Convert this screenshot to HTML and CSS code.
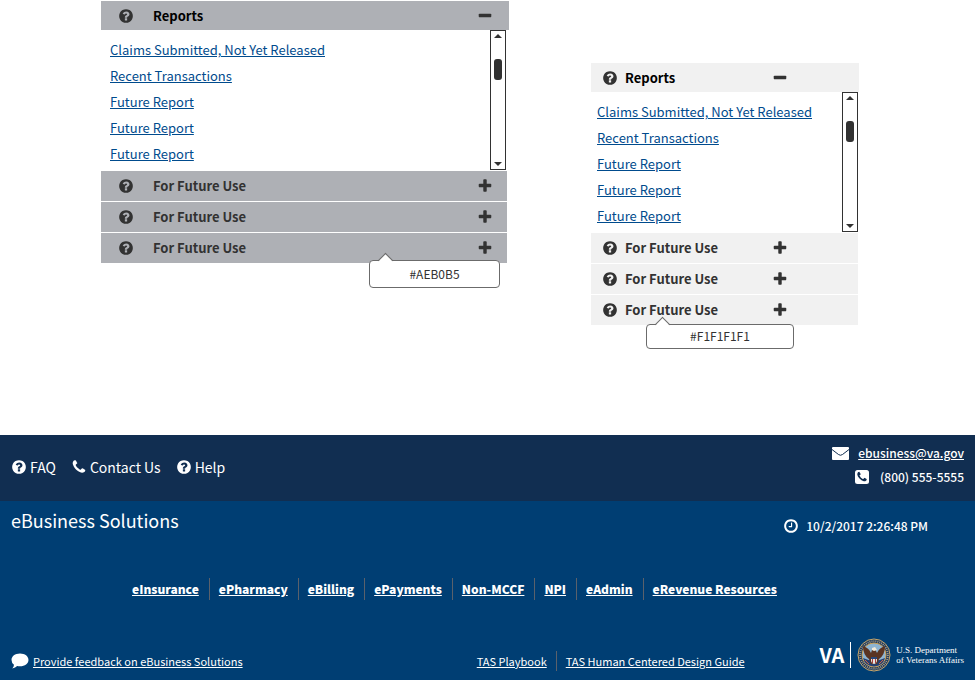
FILE: index.html
```html
<!DOCTYPE html>
<html lang="en">
<head>
<meta charset="utf-8">
<title>eBusiness Solutions</title>
<link rel="stylesheet" href="styles.css">
</head>
<body>
<svg class="sprite" aria-hidden="true">
  <symbol id="question" viewBox="0 0 1792 1792"><path d="M1024 1376v-192q0-14-9-23t-23-9h-192q-14 0-23 9t-9 23v192q0 14 9 23t23 9h192q14 0 23-9t9-23zm256-672q0-88-55.500-163t-138.500-116-170-41q-243 0-371 213-15 24 8 42l132 100q7 6 19 6 16 0 25-12 53-68 86-92 34-24 86-24 48 0 85.500 26t37.500 59q0 38-20 61t-68 45q-63 28-115.500 86.500t-52.500 125.500v36q0 14 9 23t23 9h192q14 0 23-9t9-23q0-19 21.500-49.500t54.500-49.500q32-18 49-28.500t46-35 44.500-48 28-60.500 12.500-81zm384 192q0 209-103 385.500t-279.500 279.500-385.500 103-385.500-103-279.500-279.500-103-385.500 103-385.500 279.500-279.500 385.500-103 385.500 103 279.500 279.500 103 385.500z"/></symbol>
  <symbol id="plus" viewBox="0 0 1792 1792"><path d="M1600 736v192q0 40-28 68t-68 28h-416v416q0 40-28 68t-68 28h-192q-40 0-68-28t-28-68v-416h-416q-40 0-68-28t-28-68v-192q0-40 28-68t68-28h416v-416q0-40 28-68t68-28h192q40 0 68 28t28 68v416h416q40 0 68 28t28 68z"/></symbol>
  <symbol id="minus" viewBox="0 0 1792 1792"><path d="M1600 736v192q0 40-28 68t-68 28h-1216q-40 0-68-28t-28-68v-192q0-40 28-68t68-28h1216q40 0 68 28t28 68z"/></symbol>
  <symbol id="phone" viewBox="0 0 1792 1792"><path d="M1600 1240q0 27-10 70.500t-21 68.500q-21 50-122 106-94 51-186 51-27 0-53-3.500t-57.500-12.500-47-14.500-55.500-20.500-49-18q-98-35-175-83-127-79-264-216t-216-264q-48-77-83-175-3-9-18-49t-20.500-55.500-14.500-47-12.500-57.500-3.500-53q0-92 51-186 56-101 106-122 25-11 68.500-21t70.500-10q14 0 21 3 18 6 53 76 11 19 30 54t35 63.500 31 53.500q3 4 17.500 25t21.500 35.500 7 28.500q0 20-28.500 50t-62 55-62 53-28.500 46q0 9 5 22.500t8.500 20.500 14 24 11.500 19q76 137 174 235t235 174q2 1 19 11.500t24 14 20.500 8.500 22.500 5q18 0 46-28.500t53-62 55-62 50-28.500q14 0 28.500 7t35.500 21.500 25 17.500q25 15 53.500 31t63.500 35 54 30q70 35 76 53 3 7 3 21z"/></symbol>
  <symbol id="clock" viewBox="0 0 1792 1792"><path d="M1024 544v448q0 14-9 23t-23 9h-320q-14 0-23-9t-9-23v-64q0-14 9-23t23-9h224v-352q0-14 9-23t23-9h64q14 0 23 9t9 23zm416 352q0-148-73-273t-198-198-273-73-273 73-198 198-73 273 73 273 198 198 273 73 273-73 198-198 73-273zm224 0q0 209-103 385.500t-279.500 279.500-385.500 103-385.500-103-279.500-279.500-103-385.500 103-385.500 279.500-279.500 385.500-103 385.500 103 279.500 279.500 103 385.500z"/></symbol>
</svg>

<main class="panels">
  <section class="panel panel-dark">
    <h2 class="bar bar-open">
      <svg class="icon"><use href="#question"/></svg>
      <button class="bar-toggle" type="button" aria-expanded="true"><span>Reports</span><svg class="icon"><use href="#minus"/></svg></button>
    </h2>
    <div class="panel-body">
      <ul class="reports">
        <li><a href="#">Claims Submitted, Not Yet Released</a></li>
        <li><a href="#">Recent Transactions</a></li>
        <li><a href="#">Future Report</a></li>
        <li><a href="#">Future Report</a></li>
        <li><a href="#">Future Report</a></li>
      </ul>
      <div class="scrollbar"><span class="arrow arrow-up"></span><span class="thumb"></span><span class="arrow arrow-down"></span></div>
    </div>
    <h2 class="bar"><svg class="icon"><use href="#question"/></svg><button class="bar-toggle" type="button"><span>For Future Use</span><svg class="icon"><use href="#plus"/></svg></button></h2>
    <h2 class="bar"><svg class="icon"><use href="#question"/></svg><button class="bar-toggle" type="button"><span>For Future Use</span><svg class="icon"><use href="#plus"/></svg></button></h2>
    <h2 class="bar"><svg class="icon"><use href="#question"/></svg><button class="bar-toggle" type="button"><span>For Future Use</span><svg class="icon"><use href="#plus"/></svg></button></h2>
    <div class="callout">#AEB0B5</div>
  </section>

  <section class="panel panel-light">
    <h2 class="bar bar-open">
      <svg class="icon"><use href="#question"/></svg>
      <button class="bar-toggle" type="button" aria-expanded="true"><span>Reports</span><svg class="icon"><use href="#minus"/></svg></button>
    </h2>
    <div class="panel-body">
      <ul class="reports">
        <li><a href="#">Claims Submitted, Not Yet Released</a></li>
        <li><a href="#">Recent Transactions</a></li>
        <li><a href="#">Future Report</a></li>
        <li><a href="#">Future Report</a></li>
        <li><a href="#">Future Report</a></li>
      </ul>
      <div class="scrollbar"><span class="arrow arrow-up"></span><span class="thumb"></span><span class="arrow arrow-down"></span></div>
    </div>
    <h2 class="bar"><svg class="icon"><use href="#question"/></svg><button class="bar-toggle" type="button"><span>For Future Use</span><svg class="icon"><use href="#plus"/></svg></button></h2>
    <h2 class="bar"><svg class="icon"><use href="#question"/></svg><button class="bar-toggle" type="button"><span>For Future Use</span><svg class="icon"><use href="#plus"/></svg></button></h2>
    <h2 class="bar"><svg class="icon"><use href="#question"/></svg><button class="bar-toggle" type="button"><span>For Future Use</span><svg class="icon"><use href="#plus"/></svg></button></h2>
    <div class="callout">#F1F1F1F1</div>
  </section>
</main>

<footer>
  <div class="support">
    <nav class="support-links">
      <a href="#"><svg class="icon"><use href="#question"/></svg>FAQ</a>
      <a href="#"><svg class="icon"><use href="#phone"/></svg>Contact Us</a>
      <a href="#"><svg class="icon"><use href="#question"/></svg>Help</a>
    </nav>
    <address class="contact">
      <div><svg class="icon-mail" viewBox="0 0 18 14"><rect y="1" width="17" height="13" rx="1"/><path d="M0 3.500L6.500 8.500Q8.500 10 10.500 8.500L17 3.500"/></svg><a href="#">ebusiness@va.gov</a></div>
      <div><svg class="icon-call" viewBox="0 0 14 14"><rect width="14" height="14" rx="2.500"/><use href="#phone" x="1" y="1" width="12" height="12"/></svg><span>(800) 555-5555</span></div>
    </address>
  </div>
  <div class="site">
    <div class="site-top">
      <h1>eBusiness Solutions</h1>
      <p class="time"><svg class="icon"><use href="#clock"/></svg>10/2/2017 2:26:48 PM</p>
    </div>
    <nav class="divided site-nav">
      <a href="#">eInsurance</a><a href="#">ePharmacy</a><a href="#">eBilling</a><a href="#">ePayments</a><a href="#">Non-MCCF</a><a href="#">NPI</a><a href="#">eAdmin</a><a href="#">eRevenue Resources</a>
    </nav>
    <div class="site-bottom">
      <div class="feedback"><svg class="icon-comment" viewBox="0 0 17 15"><path d="M8.500 0.500C13.200 0.500 16.500 3.200 16.500 6.500S13.200 12.500 8.500 12.500Q7 12.500 5.800 12.200Q4.200 13.900 1.200 14.500Q2.800 13 2.800 11Q0.500 9.200 0.500 6.500C0.500 3.200 3.800 0.500 8.500 0.500Z"/></svg><a href="#">Provide feedback on eBusiness Solutions</a></div>
      <nav class="divided guides"><a href="#">TAS Playbook</a><a href="#">TAS Human Centered Design Guide</a></nav>
      <div class="logo">
        <strong>VA</strong>
        <svg class="seal" viewBox="0 0 34 34">
          <circle cx="17" cy="17" r="16" fill="#17365c" stroke="#c9a76b"/>
          <circle cx="17" cy="17" r="13.800" fill="none" stroke="#a99b86" stroke-width="2" stroke-dasharray="1 1"/>
          <circle cx="17" cy="17" r="12" fill="#8eb4d2" stroke="#d0a050"/>
          <path d="M6 20Q17 25 28 20Q26 28 17 28.500Q8 28 6 20Z" fill="#263f70"/>
          <path d="M6 8Q6 17 12 21L14 26L20 26L22 21Q28 17 28 8Q22 10 20 15L18 11L15 12L14 15Q12 10 6 8Z" fill="#5a3423"/>
          <path d="M15 10L18 9L20 12L17 13L15 12Z" fill="#f3ead8"/>
          <path d="M14 19H20V22Q20 25 17 26Q14 25 14 22Z" fill="#e9e5e2"/>
          <path d="M15.500 21V25M18.500 21V25" stroke="#ad3f3c"/>
          <path d="M14 19H20V21H14Z" fill="#29477a"/>
          <path d="M8 22L12 26M26 22L22 26" stroke="#c96545"/>
        </svg>
        <span>U.S. Department<br>of Veterans Affairs</span>
      </div>
    </div>
  </div>
</footer>
</body>
</html>
```
FILE: styles.css
```css
* { box-sizing: border-box; }

body {
  display: flex;
  flex-direction: column;
  min-height: 100vh;
  margin: 0;
  background: #fff;
  color: #323232;
  font: 13px/20px "Noto Sans CJK SC", "Open Sans", sans-serif;
}

h1, h2, p, ul { margin: 0; padding: 0; }
ul { list-style: none; }
a { color: inherit; }
.sprite { position: absolute; width: 0; height: 0; }
.icon { flex: none; width: 16px; height: 16px; fill: currentColor; }

/* Accordion panels */
.panels {
  flex: 1;
  display: grid;
  grid-template-columns: 408fr 268fr;
  column-gap: 82px;
  align-items: start;
  padding: 1px 116px 0 101px;
}
.panel { position: relative; }
.panel-light { margin-top: 62px; }

.bar {
  display: flex;
  align-items: center;
  height: 30px;
  margin: 0 2px 1px 0;
  padding-left: 17px;
  background: #aeb0b5;
  font-size: 13px;
  line-height: 20px;
}
.bar-open { height: 29px; margin: 0; }
.bar-toggle {
  flex: 1;
  display: flex;
  align-items: center;
  justify-content: space-between;
  height: 100%;
  padding: 0 14px 0 19px;
  border: 0;
  background: none;
  color: inherit;
  font: inherit;
}
.bar-open .bar-toggle { padding-right: 16px; }
.bar-open span { color: #000; }

.panel-light .bar { margin-right: 1px; padding-left: 11px; background: #f1f1f1; }
.panel-light .bar-open { margin-right: 0; }
.panel-light .bar-toggle { padding: 0 70px 0 7px; }
.panel-light .bar-open .bar-toggle { padding-right: 71px; }

.panel-body {
  display: flex;
  justify-content: space-between;
  align-items: flex-start;
  height: 141px;
  padding: 0 3px 0 9px;
}
.panel-light .panel-body { padding: 0 1px 0 6px; }
.reports { padding-top: 7px; line-height: 26px; color: #004b8d; }

.scrollbar {
  display: flex;
  flex-direction: column;
  align-items: center;
  width: 16px;
  height: 140px;
  padding: 3px 0;
  border: 1px solid #323232;
}
.arrow { border: 4px solid transparent; }
.arrow-up { border-top: 0; border-bottom-color: #323232; }
.arrow-down { margin-top: auto; border-bottom: 0; border-top-color: #323232; }
.thumb { width: 8px; height: 21px; margin-top: 21px; border-radius: 3px; background: #323232; }

.callout {
  position: absolute;
  top: 259px;
  right: 9px;
  width: 131px;
  height: 28px;
  border: 1px solid #6b6b6b;
  border-radius: 4px;
  background: #fff;
  font-size: 12px;
  line-height: 25px;
  text-align: center;
}
.callout::before {
  content: "";
  position: absolute;
  top: -6px;
  left: 10px;
  width: 10px;
  height: 10px;
  border: 1px solid #6b6b6b;
  border-width: 1px 0 0 1px;
  background: linear-gradient(135deg, #fff 50%, transparent 50%);
  transform: rotate(45deg);
}
.panel-light .callout { top: 261px; right: 65px; width: 148px; height: 25px; line-height: 22px; }

/* Footer */
footer { color: #fff; }
.support {
  display: flex;
  justify-content: space-between;
  align-items: center;
  height: 66px;
  padding: 0 11px 2px;
  background: #112e51;
}
.support-links { display: flex; gap: 15px; font-size: 14px; }
.support-links a { display: flex; align-items: center; gap: 3px; text-decoration: none; }
.contact { font-size: 12px; font-style: normal; font-weight: 500; line-height: 24px; padding-bottom: 4px; }
.contact div { display: flex; align-items: center; justify-content: flex-end; gap: 8px; }
.icon-mail { width: 18px; height: 14px; fill: #fff; }
.icon-mail path { fill: none; stroke: #112e51; }
.icon-call { width: 14px; height: 14px; fill: #fff; }
.icon-call use { fill: #112e51; }
.contact .icon-call { margin-right: 3px; }

.site {
  display: flex;
  flex-direction: column;
  height: 179px;
  padding: 7px 11px 8px;
  background: #003e73;
}
.site-top { display: flex; justify-content: space-between; padding-right: 36px; }
h1 { font-size: 18px; font-weight: 400; line-height: 24px; }
.time { display: flex; align-items: center; gap: 7px; padding-top: 8px; font-size: 12px; font-weight: 500; }

.divided { display: flex; line-height: 22px; }
.divided a + a { margin-left: 9px; padding-left: 9px; border-left: 1px solid #5b616b; }
.site-nav { justify-content: center; margin-top: 42px; padding-right: 66px; font-size: 12px; font-weight: 900; }
.site-nav a + a { margin-left: 10px; }

.site-bottom {
  display: grid;
  grid-template-columns: 466fr 343fr 144fr;
  align-items: center;
  margin-top: auto;
  font-size: 11px;
}
.feedback { display: flex; align-items: center; gap: 4px; padding-top: 12px; }
.icon-comment { width: 18px; height: 16px; fill: #fff; }
.guides { padding-top: 12px; line-height: 20px; }
.logo { display: flex; align-items: center; white-space: nowrap; }
.logo strong { padding-right: 6px; border-right: 1px solid #fff; font-size: 20px; line-height: 26px; }
.seal { flex: none; width: 34px; height: 34px; margin: 0 5px 0 6px; }
.logo span { font: 9px/10px "Liberation Serif", serif; }
```
